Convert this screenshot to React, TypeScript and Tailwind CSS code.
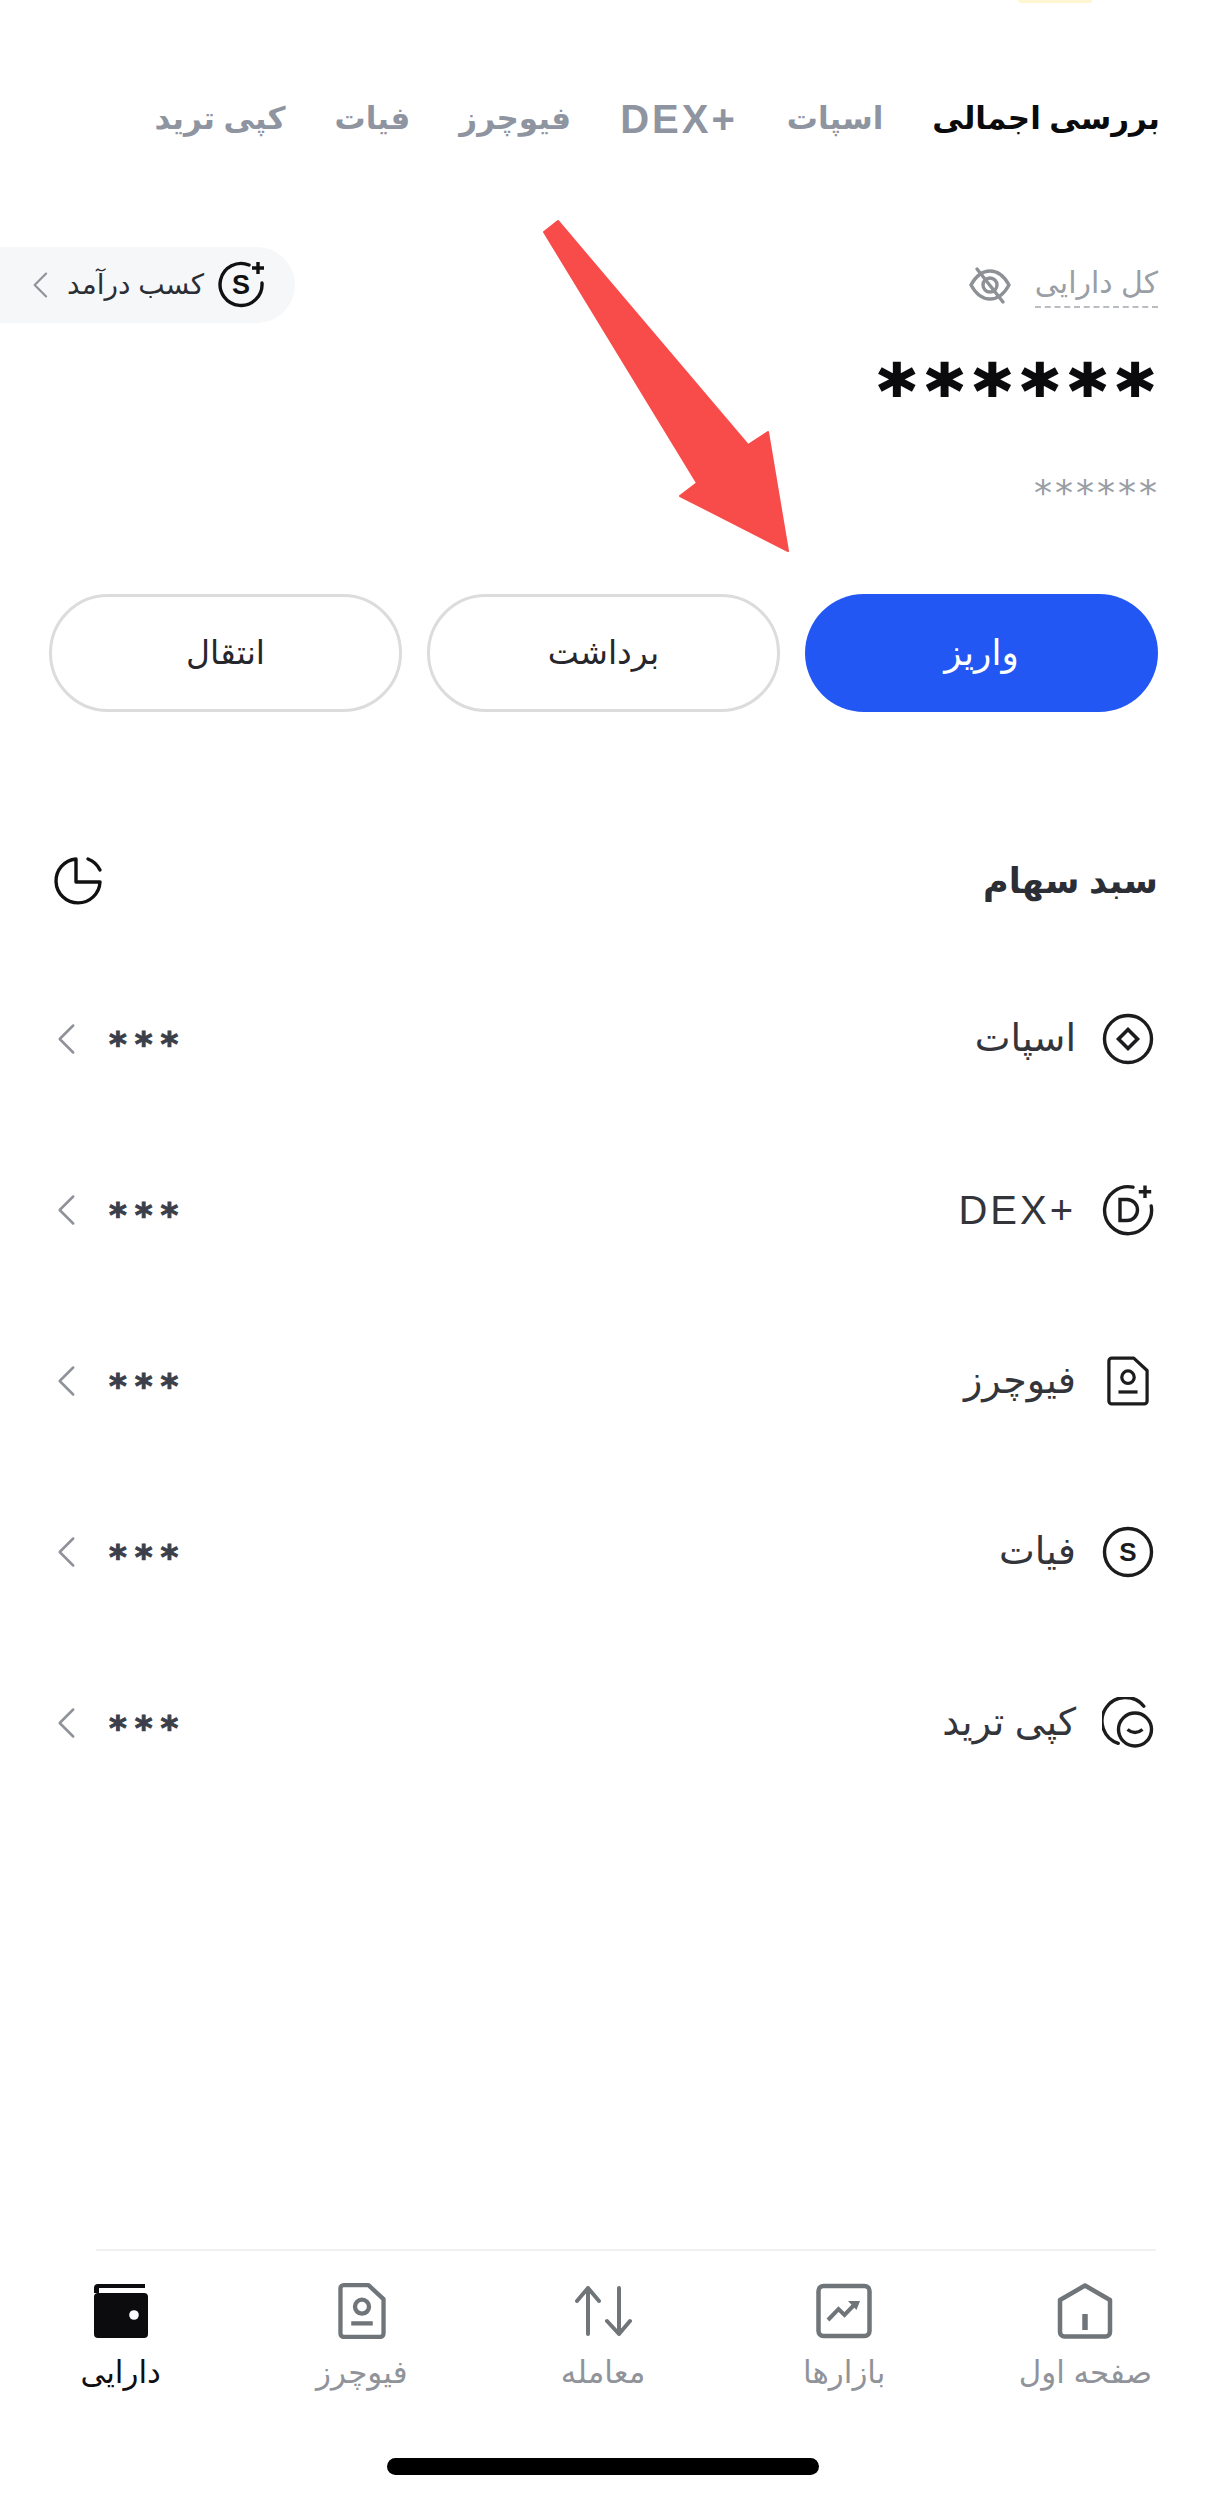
import React from "react";

const Chevron = ({ className = "" }: { className?: string }) => (
  <svg className={className} width="20" height="34" viewBox="0 0 20 34" fill="none">
    <path d="M18 2 L3 17 L18 32" stroke="#8f9399" strokeWidth="2.8" strokeLinecap="round" strokeLinejoin="round" />
  </svg>
);

const SpotIcon = () => (
  <svg width="52" height="52" viewBox="0 0 52 52" fill="none" stroke="#1c1c1e" strokeWidth="3.4">
    <circle cx="26" cy="26" r="23.5" />
    <path d="M26 16.5 L35.5 26 L26 35.5 L16.5 26 Z" strokeWidth="3.6" />
  </svg>
);
const DexIcon = () => (
  <svg width="52" height="52" viewBox="0 0 52 52" fill="none" stroke="#1c1c1e" strokeWidth="3.4">
    <path d="M31 3.2 A23.5 23.5 0 1 0 49.2 22" strokeLinecap="round" />
    <path d="M18 15.5 H25 A10.5 10.5 0 0 1 25 36.5 H18 Z" />
    <path d="M43 1.5 V14 M36.8 7.7 H49.2" />
  </svg>
);
const FuturesIcon = ({ color = "#1c1c1e", w = 42, h = 50, sw = 3.4 }: { color?: string; w?: number; h?: number; sw?: number }) => (
  <svg width={w} height={h} viewBox="0 0 44 52" fill="none" stroke={color} strokeWidth={sw}>
    <path d="M5 2 H28 L42 15 V47 A3 3 0 0 1 39 50 H5 A3 3 0 0 1 2 47 V5 A3 3 0 0 1 5 2 Z" strokeLinejoin="round" />
    <circle cx="22" cy="22" r="6.5" />
    <path d="M12 37.5 H32" />
  </svg>
);
const FiatIcon = () => (
  <svg width="52" height="52" viewBox="0 0 52 52" fill="none">
    <circle cx="26" cy="26" r="23.5" stroke="#1c1c1e" strokeWidth="3.4" />
    <text x="26" y="35" textAnchor="middle" fontSize="26" fontWeight="700" fill="#1c1c1e" fontFamily="Liberation Sans, sans-serif">S</text>
  </svg>
);
const CopyIcon = () => (
  <svg width="52" height="52" viewBox="0 0 52 52" fill="none" stroke="#1c1c1e" strokeWidth="3.4">
    <path d="M41.8 9.2 A23.5 23.5 0 1 0 16.2 46.3" strokeLinecap="round" />
    <circle cx="33" cy="32.5" r="16.5" fill="#fff" />
    <path d="M25.5 32.5 Q33 38.5 40.5 32.5" />
  </svg>
);

const rows: { label: string; Icon: React.FC; ltr?: boolean }[] = [
  { label: "اسپات", Icon: SpotIcon },
  { label: "DEX+", Icon: DexIcon, ltr: true },
  { label: "فیوچرز", Icon: () => <FuturesIcon /> },
  { label: "فیات", Icon: FiatIcon },
  { label: "کپی ترید", Icon: CopyIcon },
];

const HomeNav = () => (
  <svg width="56" height="56" viewBox="0 0 56 56" fill="none" stroke="#70757a" strokeWidth="4.5">
    <path d="M28 2.5 L53 17 V49 A4.5 4.5 0 0 1 48.5 53.5 H7.5 A4.5 4.5 0 0 1 3 49 V17 Z" strokeLinejoin="round" />
    <path d="M28 31 V47" strokeWidth="5.5" />
  </svg>
);
const MarketNav = () => (
  <svg width="56" height="56" viewBox="0 0 56 56" fill="none" stroke="#70757a" strokeWidth="4.5">
    <rect x="2.5" y="3" width="51" height="50" rx="5" />
    <path d="M12 37 L22.5 26 L28.5 32 L40 20" strokeWidth="4" />
    <path d="M32 18 H44 L40.5 27 Z" fill="#70757a" stroke="none" />
  </svg>
);
const TradeNav = () => (
  <svg width="58" height="56" viewBox="0 0 58 56" fill="none" stroke="#70757a" strokeWidth="4" strokeLinecap="round" strokeLinejoin="round">
    <path d="M14 51 V5 M3 18 L14 5 L25 18" />
    <path d="M45 5 V51 M33 38 L45 51 L56 38" />
  </svg>
);
const WalletNav = () => (
  <svg width="56" height="56" viewBox="0 0 56 56" fill="none">
    <path d="M4 1 H52 V5 H4 Z" fill="#0c0c0e" />
    <path d="M1 5 A4 4 0 0 1 5 1 H6 V10 H1 Z" fill="#0c0c0e" />
    <rect x="1" y="10" width="54" height="45" rx="4" fill="#0c0c0e" />
    <circle cx="41" cy="32" r="4.8" fill="#fff" />
  </svg>
);

const nav: { label: string; node: React.ReactNode; active?: boolean }[] = [
  { label: "صفحه اول", node: <HomeNav /> },
  { label: "بازارها", node: <MarketNav /> },
  { label: "معامله", node: <TradeNav /> },
  { label: "فیوچرز", node: <FuturesIcon color="#70757a" w={48} h={56} sw={4} /> },
  { label: "دارایی", node: <WalletNav />, active: true },
];

const tabs = ["بررسی اجمالی", "اسپات", "DEX+", "فیوچرز", "فیات", "کپی ترید"];

export default function App() {
  return (
    <div
      dir="rtl"
      className="relative flex h-[2498px] w-[1206px] flex-col overflow-hidden bg-white text-[#2c2e36] [font-family:'Liberation_Sans','DejaVu_Sans',sans-serif]"
    >
      <div className="absolute left-[1018px] top-0 h-[3px] w-[74px] rounded-b-full bg-[#fdf6d0]" />

      {/* tabs */}
      <div className="mt-[92px] flex h-[54px] items-center gap-[49px] pr-[46px] text-[31px] font-bold text-[#8e94a0]">
        {tabs.map((t, i) => (
          <span
            key={t}
            dir={t === "DEX+" ? "ltr" : "rtl"}
            className={i === 0 ? "text-[#0b0b0d]" : t === "DEX+" ? "text-[40px] tracking-[3px]" : ""}
          >
            {t}
          </span>
        ))}
      </div>

      {/* total assets */}
      <div className="mt-[101px] flex h-[76px] items-center justify-between">
        <div className="flex items-center gap-[24px] pr-[48px]">
          <span className="border-b-2 border-dashed border-[#b9bcc1] pb-[3px] text-[30px] leading-[40px] text-[#9a9ea5]">کل دارایی</span>
          <svg width="42" height="42" viewBox="0 0 42 42" fill="none" stroke="#8d9196" strokeWidth="3.4" strokeLinecap="round">
            <path d="M2 21 C8 10 14 7 21 7 C28 7 34 10 40 21 C34 32 28 35 21 35 C14 35 8 32 2 21 Z" />
            <circle cx="21" cy="21" r="7" />
            <path d="M8 5 L34 38" />
          </svg>
        </div>
        <div className="flex h-[76px] w-[295px] items-center gap-[14px] rounded-r-[38px] bg-[#f6f7f8] pr-[29px]">
          <svg width="48" height="48" viewBox="0 0 48 48" fill="none" stroke="#111" strokeWidth="3.4">
            <path d="M31 4 A21 21 0 1 0 44 22" strokeLinecap="round" />
            <path d="M40 1 V13 M34 7 H46" />
            <text x="23" y="33" textAnchor="middle" fontSize="27" fontWeight="700" fill="#111" stroke="none" fontFamily="Liberation Sans, sans-serif">S</text>
          </svg>
          <span className="whitespace-nowrap text-[28px] text-[#2c2e36]">کسب درآمد</span>
          <Chevron className="mr-[5px] h-[26px] w-[16px]" />
        </div>
      </div>

      <div dir="ltr" className="mt-[18px] h-[80px] pr-[42px] text-right text-[72px] font-bold leading-[100px] tracking-[10px] text-[#0b0b0d] [-webkit-text-stroke:2px_#0b0b0d] [font-family:'DejaVu_Sans',sans-serif]">
        ******
      </div>
      <div dir="ltr" className="mt-[50px] h-[30px] pr-[46px] text-right text-[36px] leading-[44px] tracking-[3px] text-[#9a9ea5] [font-family:'DejaVu_Sans',sans-serif]">
        ******
      </div>

      {/* buttons */}
      <div className="mt-[93px] grid grid-cols-3 gap-[25px] pl-[49px] pr-[48px] text-[33px]">
        <div className="flex h-[118px] items-center justify-center rounded-full bg-[#2357f4] text-[36px] text-white">واریز</div>
        <div className="flex h-[118px] items-center justify-center rounded-full border-[3px] border-[#dcdcdc] text-[#26272c]">برداشت</div>
        <div className="flex h-[118px] items-center justify-center rounded-full border-[3px] border-[#dcdcdc] text-[#26272c]">انتقال</div>
      </div>

      {/* portfolio */}
      <div className="mt-[140px] flex h-[58px] items-center justify-between pl-[53px] pr-[48px]">
        <span className="text-[35px] font-bold text-[#2c2e36]">سبد سهام</span>
        <svg width="50" height="50" viewBox="0 0 50 50" fill="none" stroke="#111" strokeWidth="3.4">
          <path d="M23 3 A22 22 0 1 0 47 26 H23 Z" strokeLinejoin="round" />
          <path d="M35 3 A22 22 0 0 1 47 14" strokeLinecap="round" />
        </svg>
      </div>

      <div className="mt-[43px] flex flex-col">
        {rows.map(({ label, Icon, ltr }) => (
          <div key={label} className="flex h-[171px] items-center justify-between pl-[57px] pr-[52px]">
            <div className="flex items-center gap-[26px]">
              <span className="flex h-[52px] w-[52px] items-center justify-center"><Icon /></span>
              <span dir={ltr ? "ltr" : "rtl"} className={ltr ? "text-[40px] tracking-[3px] text-[#33353b]" : "text-[38px] text-[#33353b]"}>{label}</span>
            </div>
            <div dir="ltr" className="flex flex-row-reverse items-center gap-[34px]">
              <span className="mt-[10px] text-[34px] font-bold leading-[40px] tracking-[8px] text-[#3c3f4a] [-webkit-text-stroke:1px_#3c3f4a] [font-family:'DejaVu_Sans',sans-serif]">***</span>
              <Chevron className="h-[32px] w-[18px]" />
            </div>
          </div>
        ))}
      </div>

      {/* bottom nav */}
      <div className="absolute bottom-0 left-0 right-0 flex h-[249px] flex-col items-center">
        <div className="mr-[50px] h-[2px] w-[1060px] self-start bg-[#f1f1f2]" />
        <div className="mt-[32px] grid w-full grid-cols-5">
          {nav.map((n) => (
            <div key={n.label} className="flex flex-col items-center">
              <div className="flex h-[56px] items-center justify-center">{n.node}</div>
              <span className={`mt-[16px] text-[31px] leading-[36px] ${n.active ? "text-[#0f0f11]" : "text-[#90949a]"}`}>{n.label}</span>
            </div>
          ))}
        </div>
        <div className="absolute bottom-[23px] left-[387px] h-[17px] w-[432px] rounded-full bg-black" />
      </div>

      {/* annotation arrow */}
      <svg className="absolute left-0 top-0" width="1206" height="600" viewBox="0 0 1206 600" fill="#f84c4a">
        <path d="M558 221 L544 232 L697 483 L680 496 L788 551 L768 432 L748 445 Z" stroke="#f84c4a" strokeWidth="2" strokeLinejoin="round" />
      </svg>
    </div>
  );
}
